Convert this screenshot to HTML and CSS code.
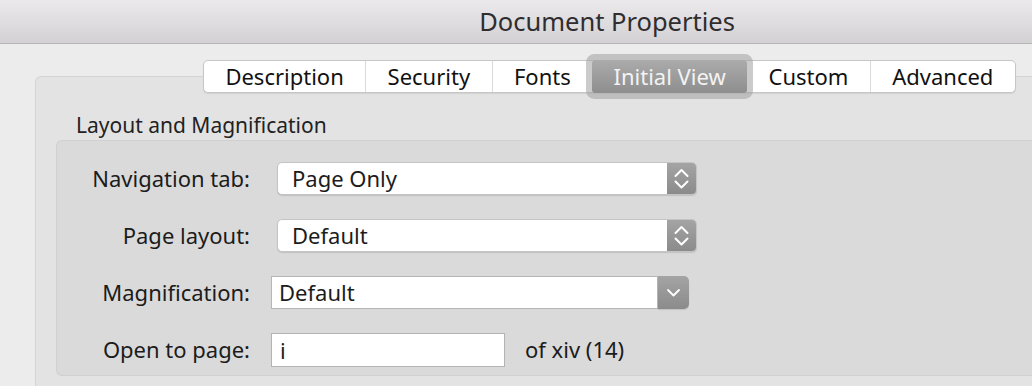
FILE: index.html
```html
<!DOCTYPE html>
<html lang="en">
<head>
<meta charset="utf-8">
<title>Document Properties</title>
<link rel="stylesheet" href="styles.css">
</head>
<body>
<div class="window">
  <header class="titlebar">Document Properties</header>
  <main class="content">
    <section class="pane">
      <nav class="tabs">
        <div class="segmented">
          <div class="tab">Description</div>
          <div class="tab">Security</div>
          <div class="tab">Fonts</div>
          <div class="tab selected">Initial View</div>
          <div class="tab">Custom</div>
          <div class="tab">Advanced</div>
        </div>
      </nav>
      <h2 class="group-title">Layout and Magnification</h2>
      <div class="group">
        <div class="row">
          <span class="label">Navigation tab:</span>
          <div class="popup">
            <span class="popup-value">Page Only</span>
            <span class="stepper">
              <svg width="29" height="31" viewBox="0 0 29 31"><path d="M8.5 13 L14.5 7 L20.5 13 M8.5 18.5 L14.5 24.5 L20.5 18.5" fill="none" stroke="#fff" stroke-width="2" stroke-linecap="round" stroke-linejoin="round"/></svg>
            </span>
          </div>
        </div>
        <div class="row">
          <span class="label">Page layout:</span>
          <div class="popup">
            <span class="popup-value">Default</span>
            <span class="stepper">
              <svg width="29" height="31" viewBox="0 0 29 31"><path d="M8.5 13 L14.5 7 L20.5 13 M8.5 18.5 L14.5 24.5 L20.5 18.5" fill="none" stroke="#fff" stroke-width="2" stroke-linecap="round" stroke-linejoin="round"/></svg>
            </span>
          </div>
        </div>
        <div class="row">
          <span class="label">Magnification:</span>
          <div class="combo">
            <span class="combo-field">Default</span>
            <span class="combo-button">
              <svg width="31" height="33" viewBox="0 0 31 33"><path d="M10 14 L15.5 19.5 L21 14" fill="none" stroke="#fff" stroke-width="1.8" stroke-linecap="round" stroke-linejoin="round"/></svg>
            </span>
          </div>
        </div>
        <div class="row">
          <span class="label">Open to page:</span>
          <div class="page-entry">
            <span class="textfield">i</span>
            <span class="page-total">of xiv (14)</span>
          </div>
        </div>
      </div>
    </section>
  </main>
</div>
</body>
</html>
```

FILE: styles.css
```css
* { box-sizing: border-box; }

html, body {
  margin: 0;
  padding: 0;
  width: 1032px;
  height: 386px;
  overflow: hidden;
  background: #ececec;
}

body {
  font-family: "Noto Sans", "Open Sans", sans-serif;
  color: #1c1c1c;
}

.window {
  width: 1032px;
  height: 386px;
  display: flex;
  flex-direction: column;
  background: #ececec;
}

/* the window is wider than the captured area, so the title sits right of centre */
.titlebar {
  height: 44px;
  flex: none;
  padding-left: 182px;
  line-height: 43px;
  text-align: center;
  font-size: 25.5px;
  color: #2f2d2f;
  background: linear-gradient(#ebe9eb, #d3d1d3);
  border-bottom: 1px solid #b6b4b6;
}

.content {
  flex: 1;
  display: flex;
  padding: 32px 0 0 35px;
}

.pane {
  flex: 1;
  background: #e3e3e3;
  border: 1px solid #d4d4d4;
  border-right: none;
  border-bottom: none;
  border-radius: 6px 0 0 0;
  padding-left: 20px;
}

.tabs {
  display: flex;
  margin-top: -17px;
  padding-left: 147px;
}

.segmented {
  display: flex;
  height: 33px;
  background: #fff;
  border: 1px solid #c6c6c6;
  border-radius: 5px;
  box-shadow: 0 1px 1px rgba(0, 0, 0, 0.08);
}

.tab {
  padding: 0 21.4px;
  font-size: 22px;
  line-height: 31px;
  color: #111;
  border-left: 1px solid #dadada;
}

.tab:first-child { border-left: none; }

.tab.selected {
  position: relative;
  z-index: 1;
  margin: -1px 0;
  line-height: 33px;
  color: #f3f3f3;
  border-left: none;
  border-radius: 3px;
  background: linear-gradient(#ababab, #8e8e8e);
  box-shadow: 0 0 0 6px rgba(160, 160, 160, 0.55);
}

.tab.selected + .tab { border-left: none; }

.group-title {
  margin: 19px 0 2px 20px;
  font-size: 21px;
  line-height: 26px;
  font-weight: normal;
  color: #222;
}

.group {
  background: #dadada;
  border: 1px solid #d0d0d0;
  border-right: none;
  border-radius: 6px 0 0 6px;
  padding: 21px 0 9px;
  display: flex;
  flex-direction: column;
  gap: 24px;
}

.row {
  display: flex;
  align-items: center;
  height: 33px;
}

.label {
  width: 193px;
  text-align: right;
  font-size: 22px;
  line-height: 33px;
}

.popup {
  margin-left: 27px;
  width: 420px;
  height: 33px;
  display: flex;
  background: #fff;
  border: 1px solid #c4c4c4;
  border-radius: 5px;
  overflow: hidden;
  box-shadow: 0 1px 1px rgba(0, 0, 0, 0.12);
}

.popup-value {
  flex: 1;
  padding-left: 14px;
  font-size: 22px;
  line-height: 31px;
}

.stepper {
  width: 29px;
  display: flex;
  background: linear-gradient(#a4a4a4, #8b8b8b);
}

.combo {
  margin-left: 21px;
  width: 418px;
  height: 33px;
  display: flex;
}

.combo-field {
  flex: 1;
  background: #fff;
  border: 1px solid #b6b6b6;
  padding-left: 7px;
  font-size: 22px;
  line-height: 31px;
}

.combo-button {
  width: 31px;
  display: flex;
  border-radius: 0 5px 5px 0;
  background: linear-gradient(#a4a4a4, #8b8b8b);
  box-shadow: 0 1px 1px rgba(0, 0, 0, 0.12);
}

.page-entry {
  margin-left: 21px;
  display: flex;
  align-items: center;
}

.textfield {
  width: 234px;
  height: 34px;
  background: #fff;
  border: 1px solid #b4b4b4;
  padding-left: 8px;
  font-size: 22px;
  line-height: 32px;
}

.page-total {
  margin-left: 20px;
  font-size: 22px;
  line-height: 33px;
}
```
